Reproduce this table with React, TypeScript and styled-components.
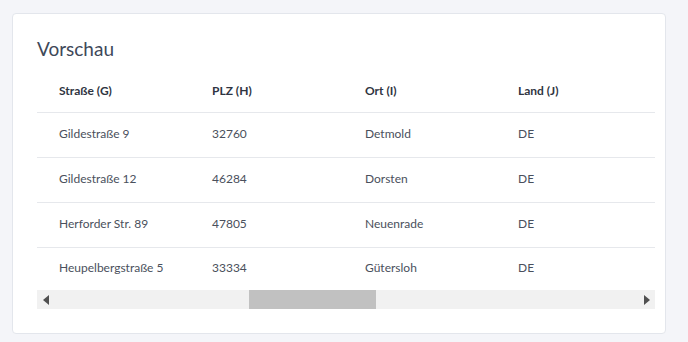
import styled, { createGlobalStyle } from 'styled-components';

const GlobalStyle = createGlobalStyle`
  html,
  body {
    margin: 0;
    padding: 0;
    background: #f4f5f9;
    font-family: Lato, 'Open Sans', sans-serif;
  }
`;

const columns = ['Straße (G)', 'PLZ (H)', 'Ort (I)', 'Land (J)'];

const rows = [
  ['Gildestraße 9', '32760', 'Detmold', 'DE'],
  ['Gildestraße 12', '46284', 'Dorsten', 'DE'],
  ['Herforder Str. 89', '47805', 'Neuenrade', 'DE'],
  ['Heupelbergstraße 5', '33334', 'Gütersloh', 'DE'],
];

function App() {
  return (
    <>
      <GlobalStyle />
      <Page>
        <Card>
          <Title>Vorschau</Title>
          <TableWrap>
            <HeaderRow>
              {columns.map((c) => (
                <HeadCell key={c}>{c}</HeadCell>
              ))}
            </HeaderRow>
            {rows.map((r, i) => (
              <Row key={r[0]} last={i === rows.length - 1}>
                {r.map((v, j) => (
                  <Cell key={j}>{v}</Cell>
                ))}
              </Row>
            ))}
            <ScrollBar>
              <ArrowButton>
                <Arrow dir="left" />
              </ArrowButton>
              <Track>
                <Thumb offset={195} size={127} />
              </Track>
              <ArrowButton>
                <Arrow dir="right" />
              </ArrowButton>
            </ScrollBar>
          </TableWrap>
        </Card>
      </Page>
    </>
  );
}

export default App;

const Page = styled.div`
  padding: 13px 22px 8px 12px;
`;

const Card = styled.div`
  background: #fff;
  border: 1px solid #e3e6ec;
  border-radius: 4px;
  padding: 22px 10px 23px 24px;
  height: 321px;
  box-sizing: border-box;
`;

const Title = styled.h2`
  margin: 0;
  height: 32px;
  font-size: 19px;
  line-height: 25px;
  font-weight: 400;
  color: #3e4859;
`;

const TableWrap = styled.div`
  width: 618px;
`;

const HeaderRow = styled.div`
  display: grid;
  grid-template-columns: repeat(4, 153px);
  height: 44px;
  align-items: center;
  border-bottom: 1px solid #e6e8ec;
`;

const HeadCell = styled.div`
  padding-left: 22px;
  font-size: 12px;
  font-weight: 700;
  color: #2f3542;
`;

const Row = styled.div<{ last?: boolean }>`
  display: grid;
  grid-template-columns: repeat(4, 153px);
  height: ${(p) => (p.last ? '42px' : '44px')};
  align-items: center;
  border-bottom: ${(p) => (p.last ? 'none' : '1px solid #e6e8ec')};
`;

const Cell = styled.div`
  padding-left: 22px;
  padding-bottom: 3px;
  font-size: 12px;
  color: #4a505c;
`;

const ScrollBar = styled.div`
  display: flex;
  height: 19px;
  background: #f1f1f1;
`;

const ArrowButton = styled.div`
  width: 17px;
  display: flex;
  align-items: center;
  justify-content: center;
`;

const Arrow = styled.div<{ dir: 'left' | 'right' }>`
  width: 0;
  height: 0;
  border-top: 5px solid transparent;
  border-bottom: 5px solid transparent;
  ${(p) =>
    p.dir === 'left'
      ? 'border-right: 6px solid #505050;'
      : 'border-left: 6px solid #505050;'}
`;

const Track = styled.div`
  flex: 1;
  position: relative;
`;

const Thumb = styled.div<{ offset: number; size: number }>`
  position: absolute;
  top: 0;
  bottom: 0;
  left: ${(p) => p.offset}px;
  width: ${(p) => p.size}px;
  background: #c1c1c1;
`;
